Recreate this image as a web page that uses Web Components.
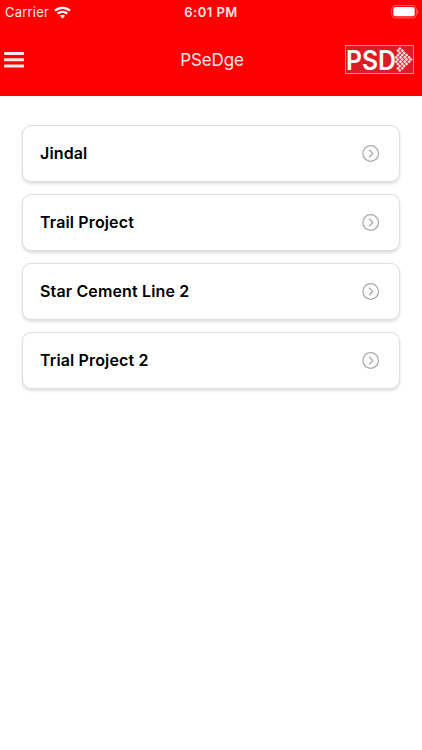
<!DOCTYPE html>
<html lang="en">
<head>
<meta charset="utf-8">
<title>PSeDge</title>
<style>
body { margin: 0; background: #fff; font-family: Inter, "Liberation Sans", sans-serif; }
</style>
</head>
<body>
<app-screen></app-screen>
<script>
const define = (name, markup) => customElements.define(name, class extends HTMLElement {
  constructor() {
    super();
    this.attachShadow({ mode: 'open' }).innerHTML = markup;
  }
});

define('status-bar', `
<style>
:host { display: grid; grid-template-columns: 1fr auto 1fr; align-items: center; height: 24px; color: #ffe9e9; font-size: 13px; line-height: 24px; }
.left { display: flex; align-items: center; gap: 5px; padding-left: 5px; letter-spacing: .2px; }
.time { font-weight: 600; letter-spacing: .45px; }
.right { display: flex; justify-content: flex-end; padding-right: 3px; }
svg { display: block; }
</style>
<div class="left"><span>Carrier</span>
<svg width="17" height="13" viewBox="0 0 17 13" fill="none" stroke="#fff" stroke-width="2.3"><path d="M1 4.7C5.2.8 11.8.8 16 4.7M3.8 7.7c2.7-2.4 6.7-2.4 9.4 0"/><path d="M8.5 12.4 5.9 9.8c1.5-1.3 3.7-1.3 5.2 0z" fill="#fff" stroke="none"/></svg></div>
<div class="time">6:01 PM</div>
<div class="right"><svg width="28" height="14" viewBox="0 0 28 14"><rect x=".7" y=".5" width="24.6" height="12.4" rx="3.5" fill="none" stroke="#ff6060"/><rect x="2.3" y="2.1" width="21.4" height="9.2" rx="2" fill="#fff"/><path d="M26.3 5v4c1.5-.7 1.5-3.3 0-4z" fill="#ff7474"/></svg></div>`);

define('menu-button', `
<style>
:host { display: block; }
svg { display: block; }
</style>
<svg width="20" height="16" viewBox="0 0 20 16"><path d="M0 0h20v3H0zM0 6.3h20v3H0zM0 12.6h20v3H0z" fill="#ffe6e6"/></svg>`);

define('brand-logo', `
<style>
:host { display: block; }
svg { display: block; overflow: visible; }
text { font: 600 27px Inter, "Liberation Sans", sans-serif; }
</style>
<svg width="69" height="29" viewBox="0 0 69 29">
<rect x=".5" y=".5" width="68" height="28" fill="#dc1c25" stroke="#f98a8a"/>
<text x="1" y="25" textLength="50" lengthAdjust="spacingAndGlyphs" fill="#fff">PSD</text>
<g class="dots" fill="#ffe9e9"></g>
</svg>`);

define('title-bar', `
<style>
:host { display: grid; grid-template-columns: 1fr auto 1fr; align-items: center; height: 72px; color: #ffe9e9; }
menu-button { margin-left: 4px; }
h1 { margin: 0; padding-left: 2px; font-size: 17px; font-weight: 400; line-height: 24px; letter-spacing: -.1px; }
brand-logo { justify-self: end; margin: 0 8px 1px 0; }
</style>
<menu-button></menu-button><h1><slot></slot></h1><brand-logo></brand-logo>`);

define('project-card', `
<style>
:host { display: flex; align-items: center; justify-content: space-between; box-sizing: border-box; height: 57px; padding: 0 19.5px 1px 17px; border: 1px solid #dedede; border-radius: 9px; background: #fff; box-shadow: 0 2px 3px rgba(0,0,0,.13); }
span { font-size: 16px; font-weight: 600; line-height: 24px; letter-spacing: .14px; color: #000; }
svg { display: block; }
</style>
<span><slot></slot></span>
<svg width="18" height="18" viewBox="0 0 18 18" fill="none" stroke="#aaa" stroke-width="1.25"><circle cx="8.7" cy="9.5" r="7.8"/><path d="m7.1 5.8 3.7 3.7-3.7 3.7"/></svg>`);

define('app-screen', `
<style>
:host { display: block; height: 750px; overflow: hidden; }
header { background: #fe0000; }
main { display: flex; flex-direction: column; gap: 12px; padding: 29px 22px 0; }
</style>
<header><status-bar></status-bar><title-bar>PSeDge</title-bar></header>
<main>
<project-card>Jindal</project-card>
<project-card>Trail Project</project-card>
<project-card>Star Cement Line 2</project-card>
<project-card>Trial Project 2</project-card>
</main>`);

// Checkered arrowhead: rows of diamonds, longest in the middle.
const logo = document.querySelector('app-screen').shadowRoot.querySelector('title-bar').shadowRoot.querySelector('brand-logo');
const rows = [[3.5, 54.8, 1], [5.7, 53, 2], [7.9, 54.8, 2], [10.1, 53, 3], [12.3, 51.2, 4], [14.5, 53, 4], [16.7, 51.2, 4], [18.9, 53, 3], [21.1, 54.8, 2], [23.3, 53, 2], [25.5, 54.8, 1]];
logo.shadowRoot.querySelector('.dots').innerHTML = rows.map(([y, x, n]) =>
  Array.from({ length: n }, (_, i) => `<path d="M${x + i * 4.3} ${y - 1.6}l1.7 1.6-1.7 1.6-1.7-1.6z"/>`).join('')).join('');
</script>
</body>
</html>
